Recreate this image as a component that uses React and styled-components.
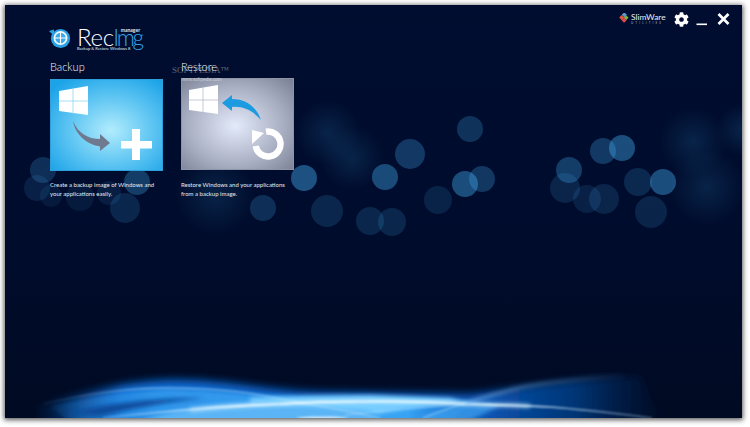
import React from 'react';
import styled, { createGlobalStyle } from 'styled-components';
import { FaCog } from 'react-icons/fa';

const GlobalStyle = createGlobalStyle`
    html, body {
        margin: 0;
        height: 100%;
        background: #fff;
        overflow: hidden;
    }
    #root {
        height: 100%;
    }
`;

const Page = styled.div`
    width: 750px;
    height: 427px;
    padding: 5px 8px 9px 5px;
    box-sizing: border-box;
`;

const Window = styled.div`
    position: relative;
    height: 100%;
    overflow: hidden;
    background: linear-gradient(#000d30, #000c2c 60%, #000a22);
    box-shadow: 0 1px 5px 1px rgba(0,0,0,0.65);
    font-family: 'Lato', sans-serif;
    color: #fff;
    isolation: isolate;
`;

const Backdrop = styled.div`
    position: absolute;
    inset: 0;
    z-index: -1;
`;

const Bubble = styled.span.attrs(p => ({
    style: {
        left: p.$x - p.$r - 5,
        top: p.$y - p.$r - 5,
        width: p.$r * 2,
        height: p.$r * 2,
        background: `rgba(70,185,255,${p.$a})`,
    },
}))`
    position: absolute;
    border-radius: 50%;
    filter: blur(0.6px);
`;

const Glow = styled.span.attrs(p => ({
    style: {
        left: p.$x - p.$r - 5,
        top: p.$y - p.$r - 5,
        width: p.$r * 2,
        height: p.$r * 2,
    },
}))`
    position: absolute;
    border-radius: 50%;
    background: radial-gradient(closest-side, rgba(40,130,180,0.2), rgba(40,130,180,0));
`;

const Wave = styled.svg`
    position: absolute;
    left: 0;
    bottom: 0;
    display: block;
`;

const Header = styled.header`
    display: flex;
    justify-content: space-between;
    align-items: flex-start;
    height: 51px;
    padding: 0 12px 0 44px;
`;

const Logo = styled.div`
    display: flex;
    align-items: flex-start;
    gap: 6px;
    padding-top: 23px;
`;

const LogoText = styled.div`
    position: relative;
    width: 63px;
`;

const LogoName = styled.div`
    font-size: 24px;
    font-weight: 300;
    line-height: 17px;
    letter-spacing: -0.3px;
    white-space: nowrap;
`;

const LogoAccent = styled.span`
    margin-left: -0.5px;
    font-size: 22.5px;
    color: #35a4e4;
    letter-spacing: -2.3px;
`;

const LogoManager = styled.span`
    position: absolute;
    right: 0;
    top: -1px;
    font-size: 5px;
    font-weight: 700;
    line-height: 6px;
    color: #dfe8f2;
`;

const LogoTagline = styled.div`
    font-size: 4.1px;
    line-height: 6px;
    white-space: nowrap;
    color: #dfe8f2;
`;

const WindowControls = styled.div`
    display: flex;
    align-items: flex-start;
    padding-top: 7px;
`;

const Brand = styled.div`
    display: flex;
    align-items: flex-start;
    gap: 2px;
    width: 55px;
    padding: 1px 0 0 2px;
`;

const BrandText = styled.div`
    font-size: 8.4px;
    line-height: 8px;
    color: #e8eef5;
`;

const BrandSub = styled.div`
    display: flex;
    justify-content: space-between;
    width: 30px;
    font-size: 3px;
    line-height: 4px;
    color: #aab4c2;
`;

const ControlButton = styled.button`
    display: flex;
    width: ${p => p.$w}px;
    padding: 0;
    border: 0;
    background: none;
    color: #fff;
`;

const Cards = styled.main`
    display: flex;
    gap: 18px;
    padding-left: 45px;
`;

const Card = styled.section`
    width: 113px;
`;

const CardTitle = styled.h2`
    margin: 0 0 ${p => p.$gap}px 0;
    font-size: 11px;
    font-weight: 300;
    line-height: 21px;
    color: #f4f6f9;
`;

const Tile = styled.div`
    position: relative;
    height: 92px;
    box-sizing: border-box;
    border: 1px solid ${p => p.$border};
    background: ${p => p.$bg};
`;

const TileArt = styled.svg`
    position: absolute;
    left: -1px;
    top: -1px;
    display: block;
`;

const CardText = styled.p`
    margin: ${p => p.$top}px 0 0 0;
    font-size: 6px;
    line-height: 8.8px;
    color: #e4eaf0;
    white-space: nowrap;
`;

const Watermark = styled.div`
    position: absolute;
    left: 167px;
    top: 60px;
    font-family: 'Liberation Serif', serif;
    font-size: 9px;
    line-height: 11px;
    color: rgba(190,195,205,0.5);
    white-space: nowrap;
`;

const WatermarkUrl = styled.div`
    position: absolute;
    left: 177px;
    top: 72px;
    font-family: 'Liberation Sans', sans-serif;
    font-size: 4.6px;
    line-height: 6px;
    color: rgba(235,238,245,0.6);
`;

const bubbles = [
    [470, 129, 13, 0.22], [410, 154, 15, 0.26], [385, 177, 13, 0.36], [304, 178, 13, 0.4],
    [327, 211, 16, 0.15], [370, 221, 14, 0.15], [392, 222, 14, 0.15], [438, 200, 14, 0.13],
    [465, 184, 13, 0.38], [482, 179, 13, 0.25], [569, 170, 13, 0.28], [565, 188, 15, 0.14],
    [603, 151, 13, 0.26], [622, 148, 13, 0.38], [587, 199, 14, 0.12], [604, 199, 15, 0.14],
    [638, 182, 14, 0.16], [663, 182, 13, 0.38], [651, 212, 16, 0.14],
    [43, 170, 13, 0.2], [37, 188, 13, 0.12], [137, 182, 13, 0.28], [109, 193, 12, 0.1],
    [80, 197, 14, 0.08], [125, 208, 15, 0.15], [263, 208, 13, 0.2], [51, 196, 11, 0.08],
];

const glows = [
    [328, 133, 32], [352, 158, 32], [693, 142, 34], [707, 187, 38], [742, 130, 26], [215, 195, 40],
];

const WindowsLogo = ({ x, top }) => (
    <polygon
        fill="#fff"
        points={`${x},${top + 5} ${x + 29},${top} ${x + 29},${top + 29} ${x},${top + 25}`}
    />
);

const WindowsSeams = ({ x, top, stroke }) => (
    <g stroke={stroke} strokeWidth="0.8" fill="none">
        <line x1={x + 14} y1={top + 2} x2={x + 14} y2={top + 28} />
        <line x1={x} y1={top + 15} x2={x + 29} y2={top + 15} />
    </g>
);

const BackupArt = () => (
    <TileArt width="113" height="92" viewBox="0 0 113 92">
        <WindowsLogo x={9} top={7} />
        <WindowsSeams x={9} top={7} stroke="#8fd4f4" />
        <path d="M23 42 C25 56 38 66 50 67.5 L50 72 L60 64 L50 55 L50 60 C38 60 28 54 23 42 Z" fill="#6f7a90" />
        <rect x="71" y="62" width="31" height="7.5" fill="#fff" />
        <rect x="82" y="50" width="8" height="31" fill="#fff" />
    </TileArt>
);

const RestoreArt = () => (
    <TileArt width="113" height="92" viewBox="0 0 113 92">
        <WindowsLogo x={8} top={7} />
        <WindowsSeams x={8} top={7} stroke="#b6bccb" />
        <path d="M41 25 L51 17 L51 21 C66 21 76 30 80 42 C72 33 63 28 51 29 L51 33 Z" fill="#1d9be0" />
        <path d="M85 53.7 A12.5 12.5 0 1 1 74.7 68" fill="none" stroke="#fff" strokeWidth="6.4" />
        <polygon points="71,52 71,66 83,55" fill="#fff" />
    </TileArt>
);

const LogoIcon = () => (
    <svg width="22" height="21" viewBox="0 0 22 21">
        <circle cx="11.5" cy="10.5" r="9.6" fill="#2a9fe4" />
        <path d="M0 3 L5 1.5 L5 8 Z" fill="#2a9fe4" />
        <circle cx="11.5" cy="10" r="7" fill="#eaf6fd" />
        <circle cx="11.5" cy="10" r="5.2" fill="#3aa8e8" />
        <path d="M11.5 3.5 V16.5 M5 10 H18" stroke="#fff" strokeWidth="1.1" />
    </svg>
);

const BrandIcon = () => (
    <svg width="10" height="10" viewBox="0 0 9 10">
        <rect x="3" y="0" width="3.6" height="3.6" fill="#5b9bd5" transform="rotate(45 4.8 1.8)" />
        <rect x="0.4" y="2.8" width="3.6" height="3.6" fill="#e0563c" transform="rotate(45 2.2 4.6)" />
        <rect x="5" y="3" width="3.4" height="3.4" fill="#7cb342" transform="rotate(45 6.7 4.7)" />
        <rect x="2.8" y="5.4" width="3.6" height="3.6" fill="#e04a4a" transform="rotate(45 4.6 7.2)" />
    </svg>
);

const WaveArt = () => (
    <Wave width="737" height="60" viewBox="5 358 737 60">
        <defs>
            <filter id="b5" x="-20%" y="-80%" width="140%" height="260%"><feGaussianBlur stdDeviation="4.5" /></filter>
            <filter id="b2" x="-20%" y="-80%" width="140%" height="260%"><feGaussianBlur stdDeviation="2" /></filter>
            <filter id="b1" x="-20%" y="-200%" width="140%" height="500%"><feGaussianBlur stdDeviation="0.8" /></filter>
            <linearGradient id="baseFill" gradientUnits="userSpaceOnUse" x1="35" x2="665" y1="0" y2="0">
                <stop offset="0" stopColor="#0d5fc4" stopOpacity="0" />
                <stop offset="0.14" stopColor="#0d6bd4" />
                <stop offset="0.7" stopColor="#0859bc" />
                <stop offset="0.86" stopColor="#063f88" stopOpacity="0.8" />
                <stop offset="1" stopColor="#052a60" stopOpacity="0" />
            </linearGradient>
            <linearGradient id="bandFill" gradientUnits="userSpaceOnUse" x1="40" x2="500" y1="0" y2="0">
                <stop offset="0" stopColor="#2b8ee6" stopOpacity="0" />
                <stop offset="0.25" stopColor="#2f95ea" />
                <stop offset="0.8" stopColor="#38a4f4" />
                <stop offset="1" stopColor="#1a78dc" stopOpacity="0" />
            </linearGradient>
            <linearGradient id="mainLine" gradientUnits="userSpaceOnUse" x1="103" x2="655" y1="0" y2="0">
                <stop offset="0" stopColor="#bfe6ff" stopOpacity="0.3" />
                <stop offset="0.25" stopColor="#f4fbff" />
                <stop offset="0.7" stopColor="#eaf8ff" />
                <stop offset="1" stopColor="#9fc8ee" stopOpacity="0.4" />
            </linearGradient>
            <linearGradient id="topLine" gradientUnits="userSpaceOnUse" x1="43" x2="380" y1="0" y2="0">
                <stop offset="0" stopColor="#8fcdfa" stopOpacity="0.1" />
                <stop offset="0.3" stopColor="#b9e3ff" stopOpacity="0.8" />
                <stop offset="1" stopColor="#d5f0ff" stopOpacity="0.5" />
            </linearGradient>
            <linearGradient id="riseLine" gradientUnits="userSpaceOnUse" x1="463" x2="625" y1="0" y2="0">
                <stop offset="0" stopColor="#8fd0ff" stopOpacity="0.8" />
                <stop offset="1" stopColor="#8aa8cc" stopOpacity="0.05" />
            </linearGradient>
        </defs>
        <path filter="url(#b5)" fill="url(#baseFill)" d="M30 435 L30 408 C80 394 120 382 165 380 C220 378 260 390 320 392 L470 394 C520 388 570 378 640 376 L670 435 Z" />
        <path filter="url(#b2)" fill="url(#bandFill)" d="M50 406 C90 396 130 390 170 389 C220 389 265 397 330 400 L470 402 L440 435 L85 435 Z" />
        <path filter="url(#b2)" fill="#0a4c9c" d="M70 413 C105 404 150 398 205 398 C165 402 130 409 100 416 Z" />
        <path filter="url(#b2)" fill="#5ab4f6" d="M110 435 C160 408 220 403 260 402 L350 405 L410 435 Z" />
        <path filter="url(#b2)" fill="#74ccff" d="M250 398 C290 396 330 395 370 395 L450 398 L470 403 C430 405 400 409 378 414 C330 406 280 405 250 404 Z" />
        <path filter="url(#b2)" fill="#3fa0ee" fillOpacity="0.75" d="M400 435 C420 412 450 405 475 403 L500 406 L440 435 Z" />
        <path filter="url(#b1)" fill="none" stroke="url(#topLine)" strokeWidth="1" d="M43 404 C90 393 130 388 165 388 C205 388 240 391 265 396 C300 403 335 408 380 418" />
        <path filter="url(#b2)" fill="none" stroke="#c5ecff" strokeOpacity="0.75" strokeWidth="3.5" d="M190 410 C230 406 255 405 280 404 C310 402 330 402 360 401.5 C400 401 435 402 467 404 C490 405 510 405 530 406" />
        <path filter="url(#b1)" fill="none" stroke="url(#mainLine)" strokeWidth="1.7" d="M103 418 C140 414 170 411 197 409 C230 406 255 405 280 404 C310 402 330 402 360 401.5 C400 401 435 402 467 404 C500 405 525 405.5 550 407 C590 410 620 414 652 418" />
        <path filter="url(#b2)" fill="none" stroke="url(#riseLine)" strokeWidth="2.4" d="M463 404 C485 397 505 391 523 387 C550 382 575 379 625 376" />
        <path filter="url(#b1)" fill="none" stroke="#8fc4ee" strokeOpacity="0.35" strokeWidth="0.8" d="M505 399 L620 399" />
        <path filter="url(#b1)" fill="none" stroke="#b5e3ff" strokeOpacity="0.6" strokeWidth="1" d="M345 415 C380 411 420 407 465 404" />
        <path filter="url(#b1)" fill="none" stroke="#bfe9ff" strokeOpacity="0.6" strokeWidth="1.1" d="M423 418 C438 412 450 408 465 403" />
        <ellipse cx="322" cy="418" rx="26" ry="1.5" fill="#fff" fillOpacity="0.7" filter="url(#b1)" />
    </Wave>
);

const App = () => (
    <>
        <GlobalStyle />
        <Page>
            <Window>
                <Backdrop>
                    {glows.map(([x, y, r]) => (
                        <Glow key={`${x}-${y}`} $x={x} $y={y} $r={r} />
                    ))}
                    {bubbles.map(([x, y, r, a]) => (
                        <Bubble key={`${x}-${y}`} $x={x} $y={y} $r={r} $a={a} />
                    ))}
                    <WaveArt />
                    <Watermark>SOFTPEDIA™</Watermark>
                </Backdrop>
                <Header>
                    <Logo>
                        <LogoIcon />
                        <LogoText>
                            <LogoManager>manager</LogoManager>
                            <LogoName>Rec<LogoAccent>Img</LogoAccent></LogoName>
                            <LogoTagline>Backup &amp; Restore Windows 8</LogoTagline>
                        </LogoText>
                    </Logo>
                    <WindowControls>
                        <Brand>
                            <BrandIcon />
                            <div>
                                <BrandText>SlimWare</BrandText>
                                <BrandSub>
                                    {'UTILITIES'.split('').map((c, i) => <span key={i}>{c}</span>)}
                                </BrandSub>
                            </div>
                        </Brand>
                        <ControlButton $w={22}><FaCog size={15} /></ControlButton>
                        <ControlButton $w={21}>
                            <svg width="12" height="15" viewBox="0 0 12 15"><rect x="0.5" y="11.5" width="10.5" height="1.6" fill="#fff" /></svg>
                        </ControlButton>
                        <ControlButton $w={13}>
                            <svg width="13" height="15" viewBox="0 0 13 15"><path d="M1.5 2 L11.5 12 M11.5 2 L1.5 12" stroke="#fff" strokeWidth="2.7" /></svg>
                        </ControlButton>
                    </WindowControls>
                </Header>
                <Cards>
                    <Card>
                        <CardTitle $gap={2}>Backup</CardTitle>
                        <Tile $border="#2f9fdc" $bg="radial-gradient(ellipse 70% 70% at 54% 56%, #b2ecfd, #5cc4f2 55%, #1ba3e8 100%)">
                            <BackupArt />
                        </Tile>
                        <CardText $top={10}>
                            Create a backup image of Windows and<br />your applications easily.
                        </CardText>
                    </Card>
                    <Card>
                        <CardTitle $gap={1}>Restore</CardTitle>
                        <Tile $border="#8c94a6" $bg="radial-gradient(ellipse 72% 72% at 48% 52%, #e3eafa, #a9afc2 60%, #7b8295 100%)">
                            <RestoreArt />
                        </Tile>
                        <CardText $top={11}>
                            Restore Windows and your applications<br />from a backup image.
                        </CardText>
                    </Card>
                </Cards>
                <WatermarkUrl>www.softpedia.com</WatermarkUrl>
            </Window>
        </Page>
    </>
);

export default App;
